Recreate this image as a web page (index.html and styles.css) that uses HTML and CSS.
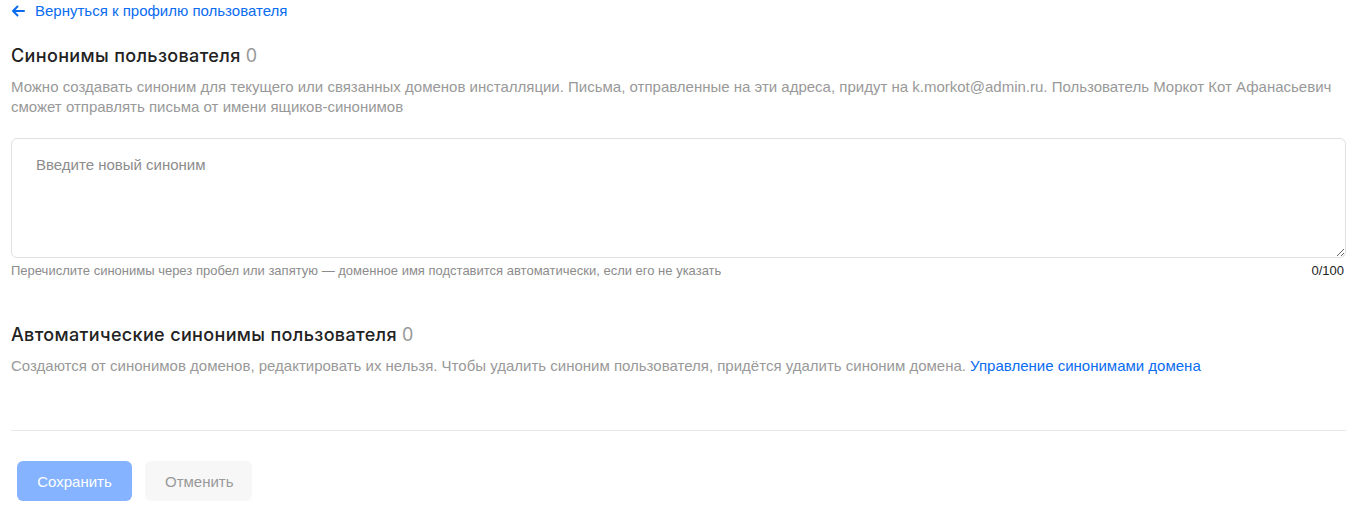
FILE: index.html
```html
<!DOCTYPE html>
<html lang="ru">
<head>
<meta charset="utf-8">
<link rel="stylesheet" href="styles.css">
</head>
<body>
<div class="page">
  <a class="back" href="#">
    <svg class="back-icon" width="14" height="12" viewBox="0 0 14 12" aria-hidden="true"><path d="M13 6H2M6.5 1.5L2 6l4.5 4.5" fill="none" stroke="#0a6cf0" stroke-width="2" stroke-linecap="round" stroke-linejoin="round"/></svg>
    <span>Вернуться к профилю пользователя</span>
  </a>

  <section class="section">
    <h2 class="title">Синонимы пользователя <span class="count">0</span></h2>
    <p class="desc">Можно создавать синоним для текущего или связанных доменов инсталляции. Письма, отправленные на эти адреса, придут на k.morkot@admin.ru. Пользователь Моркот Кот Афанасьевич сможет отправлять письма от имени ящиков-синонимов</p>
    <textarea class="field" placeholder="Введите новый синоним"></textarea>
    <div class="hint-row">
      <span class="hint">Перечислите синонимы через пробел или запятую — доменное имя подставится автоматически, если его не указать</span>
      <span class="counter">0/100</span>
    </div>
  </section>

  <section class="section section-auto">
    <h2 class="title">Автоматические синонимы пользователя <span class="count">0</span></h2>
    <p class="desc">Создаются от синонимов доменов, редактировать их нельзя. Чтобы удалить синоним пользователя, придётся удалить синоним домена. <a class="link" href="#">Управление синонимами домена</a></p>
  </section>

  <div class="footer">
    <button class="btn btn-primary" type="button">Сохранить</button>
    <button class="btn btn-secondary" type="button">Отменить</button>
  </div>
</div>
</body>
</html>
```

FILE: styles.css
```css
* { box-sizing: border-box; }
html, body { margin: 0; padding: 0; background: #fff; }
body { font-family: "Liberation Sans", Arial, sans-serif; color: #333; }

.page {
  padding: 2px 7px 0 11px;
}

.back {
  display: inline-flex;
  align-items: center;
  gap: 10px;
  color: #0a6cf0;
  text-decoration: none;
  font-size: 15px;
  line-height: 18px;
}
.back-icon { display: block; }

.section { margin-top: 24px; }
.section-auto { margin-top: 45px; }

.title {
  margin: 0;
  font-family: Inter, "Noto Sans", sans-serif;
  font-weight: 500;
  font-size: 18px;
  line-height: 22px;
  color: #222;
  letter-spacing: 0.35px;
}
.count { color: #999; font-weight: 400; }

.desc {
  margin: 10px 0 0;
  font-size: 15px;
  line-height: 20px;
  color: #999;
}
.link { color: #0a6cf0; text-decoration: none; }

.field {
  display: block;
  width: 100%;
  height: 120px;
  margin-top: 21px;
  padding: 17px 24px;
  border: 1px solid #e0e0e0;
  border-radius: 6px;
  font-family: "Liberation Sans", Arial, sans-serif;
  font-size: 15px;
  line-height: 18px;
  color: #333;
  resize: vertical;
  outline: none;
}
.field::placeholder { color: #8c8c8c; }

.hint-row {
  display: flex;
  justify-content: space-between;
  align-items: baseline;
  margin-top: 5px;
  font-size: 13px;
  line-height: 16px;
}
.hint { color: #8c8c8c; }
.counter { color: #222; padding-right: 2px; }

.footer {
  margin-top: 54px;
  border-top: 1px solid #e8e8e8;
  padding: 30px 6px 0;
  display: flex;
  gap: 13px;
}
.btn {
  height: 40px;
  border: none;
  border-radius: 6px;
  font-family: "Liberation Sans", Arial, sans-serif;
  font-size: 15px;
  padding: 0 20px;
  cursor: pointer;
}
.btn-primary { background: #85b3ff; color: #fff; width: 115px; }
.btn-secondary { background: #f7f7f7; color: #999; width: 107px; }
```
